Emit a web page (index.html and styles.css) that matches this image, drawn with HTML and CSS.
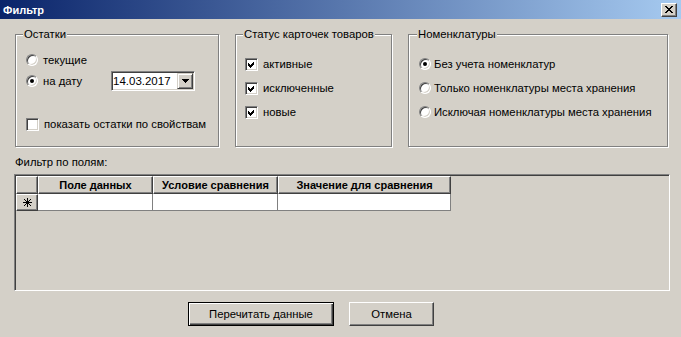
FILE: index.html
```html
<!DOCTYPE html>
<html lang="ru">
<head>
<meta charset="utf-8">
<title>Фильтр</title>
<link rel="stylesheet" href="styles.css">
</head>
<body>
<div class="window">
  <div class="titlebar">
    <span class="title">Фильтр</span>
    <span class="close">
      <svg width="8" height="7" viewBox="0 0 8 7" shape-rendering="crispEdges"><path d="M0 0h2v1h-2zM6 0h2v1h-2zM1 1h2v1h-2zM5 1h2v1h-2zM2 2h4v1h-4zM3 3h2v1h-2zM2 4h4v1h-4zM1 5h2v1h-2zM5 5h2v1h-2zM0 6h2v1h-2zM6 6h2v1h-2z" fill="#000"/></svg>
    </span>
  </div>
  <div class="content">
    <div class="groups">
      <div class="group g1">
        <div class="group-title">Остатки</div>
        <div class="opt r1"><span class="radio"></span><span class="lbl">текущие</span></div>
        <div class="opt r2"><span class="radio checked"></span><span class="lbl date-lbl">на дату</span>
          <div class="combo"><span class="combo-text">14.03.2017</span><span class="combo-btn"><svg width="7" height="4" viewBox="0 0 7 4" shape-rendering="crispEdges"><path d="M0 0h7v1h-7zM1 1h5v1h-5zM2 2h3v1h-3zM3 3h1v1h-1z" fill="#000"/></svg></span></div>
        </div>
        <div class="opt r3"><span class="check"></span><span class="lbl">показать остатки по свойствам</span></div>
      </div>
      <div class="group g2">
        <div class="group-title">Статус карточек товаров</div>
        <div class="opt first"><span class="check"><svg width="11" height="11" viewBox="0 0 11 11" shape-rendering="crispEdges"><polygon points="2,4 4,6 8,2 8,5 4,9 2,7" fill="#000"/></svg></span><span class="lbl">активные</span></div>
        <div class="opt"><span class="check"><svg width="11" height="11" viewBox="0 0 11 11" shape-rendering="crispEdges"><polygon points="2,4 4,6 8,2 8,5 4,9 2,7" fill="#000"/></svg></span><span class="lbl">исключенные</span></div>
        <div class="opt"><span class="check"><svg width="11" height="11" viewBox="0 0 11 11" shape-rendering="crispEdges"><polygon points="2,4 4,6 8,2 8,5 4,9 2,7" fill="#000"/></svg></span><span class="lbl">новые</span></div>
      </div>
      <div class="group g3">
        <div class="group-title">Номенклатуры</div>
        <div class="opt first"><span class="radio checked"></span><span class="lbl">Без учета номенклатур</span></div>
        <div class="opt"><span class="radio"></span><span class="lbl">Только номенклатуры места хранения</span></div>
        <div class="opt"><span class="radio"></span><span class="lbl">Исключая номенклатуры места хранения</span></div>
      </div>
    </div>
    <div class="fields-label">Фильтр по полям:</div>
    <div class="grid">
      <table class="table">
        <colgroup><col class="c-ind"><col class="c1"><col class="c2"><col class="c3"></colgroup>
        <thead>
          <tr><th></th><th>Поле данных</th><th>Условие сравнения</th><th>Значение для сравнения</th></tr>
        </thead>
        <tbody>
          <tr><td class="ind"><svg width="9" height="9" viewBox="0 0 9 9" shape-rendering="crispEdges"><path d="M4 0h1v9h-1zM0 4h9v1h-9zM1 1h1v1h-1zM2 2h1v1h-1zM3 3h1v1h-1zM5 5h1v1h-1zM6 6h1v1h-1zM7 7h1v1h-1zM7 1h1v1h-1zM6 2h1v1h-1zM5 3h1v1h-1zM3 5h1v1h-1zM2 6h1v1h-1zM1 7h1v1h-1z" fill="#000"/></svg></td><td class="cell"></td><td class="cell"></td><td class="cell"></td></tr>
        </tbody>
      </table>
    </div>
    <div class="buttons">
      <button class="btn btn-default" type="button">Перечитать данные</button>
      <button class="btn btn-cancel" type="button">Отмена</button>
    </div>
  </div>
</div>
</body>
</html>
```
FILE: styles.css
```css
* { box-sizing: border-box; }

body {
  margin: 0;
  background: #d4d0c8;
  font-family: "Liberation Sans", Arial, sans-serif;
  font-size: 11.3px;
  color: #000;
}

.window {
  width: 681px;
  height: 337px;
  background: #d4d0c8;
  overflow: hidden;
}

.titlebar {
  height: 19px;
  background: linear-gradient(to right, #0a246a, #a6caf0);
  display: flex;
  align-items: center;
  justify-content: space-between;
  padding: 0 4px 0 3px;
}

.title {
  color: #fff;
  font-weight: bold;
  font-size: 11px;
}

.close {
  width: 16px;
  height: 14px;
  background: #d4d0c8;
  border: 1px solid;
  border-color: #fff #404040 #404040 #fff;
  box-shadow: inset -1px -1px 0 #808080;
  display: flex;
  align-items: center;
  justify-content: center;
}

.groups {
  display: flex;
  gap: 16px;
  padding-left: 15px;
  margin-top: 15px;
}

.group {
  height: 113px;
  border: 1px solid #808080;
  box-shadow: 1px 1px 0 #fff, inset 1px 1px 0 #fff;
  display: flex;
  flex-direction: column;
}

.g1 { width: 204px; padding-left: 10px; }
.g2 { width: 157px; padding-left: 9px; }
.g3 { width: 260px; padding-left: 10px; }

.group-title {
  align-self: flex-start;
  margin: -7px 0 0 -3px;
  padding: 0 1px;
  background: #d4d0c8;
  line-height: 13px;
}
.g2 .group-title { margin-left: -2px; }
.g3 .group-title { margin-left: -2px; }

.opt {
  display: flex;
  align-items: center;
  height: 16px;
  white-space: nowrap;
}

.g1 .r1 { margin-top: 11px; }
.g1 .r2 { margin-top: 3px; height: 20px; }
.g1 .r3 { margin-top: 25px; }

.g2 .opt, .g3 .opt { margin-top: 8px; }
.g2 .opt.first, .g3 .opt.first { margin-top: 15px; }

.radio {
  position: relative;
  flex: none;
  width: 12px;
  height: 12px;
  border-radius: 50%;
  background: #fff;
  border: 1px solid;
  border-color: #808080 #fff #fff #808080;
  box-shadow: inset 1px 1px 0 #404040, inset -1px -1px 0 #d4d0c8;
}

.radio.checked::after {
  content: "";
  position: absolute;
  left: 3px;
  top: 3px;
  width: 4px;
  height: 4px;
  border-radius: 50%;
  background: #000;
}

.check {
  flex: none;
  width: 13px;
  height: 13px;
  background: #fff;
  border: 1px solid;
  border-color: #808080 #fff #fff #808080;
  box-shadow: inset 1px 1px 0 #404040, inset -1px -1px 0 #d4d0c8;
  display: flex;
}

.check svg { display: block; }

.lbl { margin-left: 5px; }
.g2 .lbl { margin-left: 5px; }
.g3 .lbl { margin-left: 3px; }

.date-lbl { width: 68px; }

.combo {
  width: 84px;
  height: 20px;
  background: #fff;
  border: 1px solid;
  border-color: #808080 #fff #fff #808080;
  box-shadow: inset 1px 1px 0 #404040, inset -1px -1px 0 #d4d0c8;
  display: flex;
  align-items: center;
  justify-content: space-between;
  padding: 1px 1px 1px 1px;
}

.combo-text { font-size: 11.5px; }

.combo-btn {
  width: 16px;
  height: 16px;
  background: #d4d0c8;
  border: 1px solid;
  border-color: #d4d0c8 #404040 #404040 #d4d0c8;
  box-shadow: inset 1px 1px 0 #fff, inset -1px -1px 0 #808080;
  display: flex;
  align-items: center;
  justify-content: center;
}

.fields-label {
  margin: 9px 0 0 15px;
  line-height: 13px;
}

.grid {
  margin: 5px 0 0 14px;
  width: 656px;
  height: 117px;
  border: 1px solid;
  border-color: #808080 #fff #fff #808080;
  box-shadow: inset 1px 1px 0 #404040;
  padding: 1px 0 0 1px;
}

.table {
  border-collapse: separate;
  border-spacing: 0;
  table-layout: fixed;
  width: 435px;
}

.c-ind { width: 22px; }
.c1 { width: 115px; }
.c2 { width: 125px; }
.c3 { width: 173px; }

.table th {
  height: 18px;
  padding: 0;
  background: #d4d0c8;
  font-weight: bold;
  font-size: 11px;
  text-align: center;
  border-top: 1px solid #fff;
  border-left: 1px solid #fff;
  border-right: 1px solid #404040;
  border-bottom: 1px solid #404040;
  box-shadow: inset -1px -1px 0 #808080;
  white-space: nowrap;
}

.table td {
  height: 17px;
  padding: 0;
}

.table td.ind {
  background: #d4d0c8;
  border-top: 1px solid #fff;
  border-left: 1px solid #fff;
  border-right: 1px solid #404040;
  border-bottom: 1px solid #404040;
  box-shadow: inset -1px -1px 0 #808080;
  text-align: center;
  vertical-align: middle;
}

.table td.ind svg { display: block; margin: 0 auto; }

.table td.cell {
  background: #fff;
  border-right: 1px solid #808080;
  border-bottom: 1px solid #808080;
}

.buttons {
  display: flex;
  gap: 15px;
  margin: 11px 0 0 188px;
}

.btn {
  height: 24px;
  padding: 0;
  margin: 0;
  font-family: inherit;
  font-size: 11.3px;
  color: #000;
  background: #d4d0c8;
  display: flex;
  align-items: center;
  justify-content: center;
  border-radius: 0;
}

.btn-default {
  width: 146px;
  border: 1px solid #000;
  box-shadow: inset 1px 1px 0 #fff, inset -1px -1px 0 #404040, inset -2px -2px 0 #808080;
}

.btn-cancel {
  width: 85px;
  border: 1px solid;
  border-color: #fff #404040 #404040 #fff;
  box-shadow: inset -1px -1px 0 #808080;
}
```
